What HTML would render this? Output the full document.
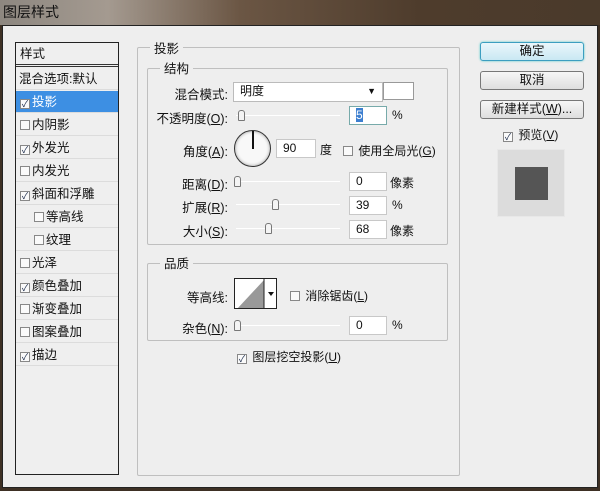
<!DOCTYPE html>
<html><head><meta charset="utf-8"><style>
*{margin:0;padding:0;box-sizing:border-box}
body{width:600px;height:491px;overflow:hidden;background:#3e3024;font-family:"Liberation Sans","Noto Sans CJK SC",sans-serif;font-size:12px;color:#111;position:relative}
.a{position:absolute}
.title{left:0;top:0;width:600px;height:25px;background:linear-gradient(90deg,#8d8780 0%,#a49a90 18%,#6b5644 40%,#4e3c2c 70%,#4a3a2b 100%)}
.title span{position:absolute;left:3px;top:2px;font-size:14px;color:#111}
.body{left:2px;top:25px;width:596px;height:463px;background:#eeeeee;border:1px solid #222}
.list{left:15px;top:42px;width:104px;height:433px;border:1px solid #222;background:#efefef}
.row{position:absolute;left:0;width:102px;height:22px;border-bottom:1px solid #dcdcdc;line-height:22px;font-size:12.5px}
.cb{display:inline-block;width:10px;height:10px;border:1px solid #888;background:#fafafa;vertical-align:-1px;margin-right:2px;font-size:9px;line-height:8px;text-align:center;color:#124}
.grp{border:1px solid #bfbfbf;border-radius:2px}
.lg{position:absolute;background:#eeeeee;padding:0 4px;font-size:12.5px}
.lbl{position:absolute;text-align:right;font-size:12.5px}
.inp{position:absolute;height:19px;background:#fff;border:1px solid #c8c8c8;padding-left:6px;line-height:17px;font-size:12px}
.track{position:absolute;height:1px;background:#aaa;border-bottom:1px solid #fff}
.knob{position:absolute;width:7px;height:11px;border:1px solid #777;border-radius:3px 3px 1px 1px;background:#f4f4f4}
.btn{position:absolute;left:480px;width:104px;height:19px;border:1px solid #777;border-radius:3px;background:linear-gradient(#f6f6f6,#dedede);text-align:center;line-height:17px;font-size:12.5px}
</style></head><body>
<div class="a title"><span>图层样式</span></div>
<div class="a body"></div>
<div class="a list">
 <div class="row" style="top:0;height:24px;border-bottom:3px double #333;padding-left:4px">样式</div>
 <div class="row" style="top:25px;padding-left:3px">混合选项:默认</div>
 <div class="row" style="top:48px;background:#3d8fe3;color:#fff;padding-left:4px"><span class="cb">✓</span>投影</div>
 <div class="row" style="top:71px;padding-left:4px"><span class="cb"></span>内阴影</div>
 <div class="row" style="top:94px;padding-left:4px"><span class="cb">✓</span>外发光</div>
 <div class="row" style="top:117px;padding-left:4px"><span class="cb"></span>内发光</div>
 <div class="row" style="top:140px;padding-left:4px"><span class="cb">✓</span>斜面和浮雕</div>
 <div class="row" style="top:163px;padding-left:18px"><span class="cb"></span>等高线</div>
 <div class="row" style="top:186px;padding-left:18px"><span class="cb"></span>纹理</div>
 <div class="row" style="top:209px;padding-left:4px"><span class="cb"></span>光泽</div>
 <div class="row" style="top:232px;padding-left:4px"><span class="cb">✓</span>颜色叠加</div>
 <div class="row" style="top:255px;padding-left:4px"><span class="cb"></span>渐变叠加</div>
 <div class="row" style="top:278px;padding-left:4px"><span class="cb"></span>图案叠加</div>
 <div class="row" style="top:301px;padding-left:4px"><span class="cb">✓</span>描边</div>
</div>
<div class="a grp" style="left:137px;top:47px;width:323px;height:429px"></div>
<div class="lg" style="left:150px;top:38px">投影</div>
<div class="a grp" style="left:147px;top:68px;width:301px;height:177px"></div>
<div class="lg" style="left:160px;top:58px">结构</div>
<div class="lbl" style="left:140px;width:88px;top:84px">混合模式:</div>
<div class="inp" style="left:233px;top:82px;width:150px;height:20px;border-color:#bbb">明度<span style="position:absolute;right:6px;top:0;font-size:9px">▼</span></div>
<div class="a" style="left:383px;top:82px;width:31px;height:18px;background:#fff;border:1px solid #999"></div>
<div class="lbl" style="left:140px;width:88px;top:108px">不透明度(<u>O</u>):</div>
<div class="track" style="left:236px;top:115px;width:104px"></div><div class="knob" style="left:238px;top:110px"></div>
<div class="inp" style="left:349px;top:106px;width:38px;border-color:#7aa"><span style="background:#3d7fd0;color:#fff">5</span></div>
<div class="a" style="left:392px;top:108px">%</div>
<div class="lbl" style="left:140px;width:88px;top:141px">角度(<u>A</u>):</div>
<div class="a" style="left:234px;top:130px;width:37px;height:37px;border:1px solid #333;border-radius:50%;background:#f8f8f8;box-shadow:inset 0 0 3px #999"></div>
<div class="a" style="left:252px;top:131px;width:2px;height:18px;background:#111"></div>
<div class="inp" style="left:276px;top:139px;width:40px">90</div>
<div class="a" style="left:320px;top:141px">度</div>
<div class="a" style="left:343px;top:142px"><span class="cb"></span> 使用全局光(<u>G</u>)</div>
<div class="lbl" style="left:140px;width:88px;top:174px">距离(<u>D</u>):</div>
<div class="track" style="left:236px;top:181px;width:104px"></div><div class="knob" style="left:234px;top:176px"></div>
<div class="inp" style="left:349px;top:172px;width:38px">0</div><div class="a" style="left:390px;top:174px">像素</div>
<div class="lbl" style="left:140px;width:88px;top:197px">扩展(<u>R</u>):</div>
<div class="track" style="left:236px;top:204px;width:104px"></div><div class="knob" style="left:272px;top:199px"></div>
<div class="inp" style="left:349px;top:196px;width:38px">39</div><div class="a" style="left:392px;top:198px">%</div>
<div class="lbl" style="left:140px;width:88px;top:221px">大小(<u>S</u>):</div>
<div class="track" style="left:236px;top:228px;width:104px"></div><div class="knob" style="left:265px;top:223px"></div>
<div class="inp" style="left:349px;top:220px;width:38px">68</div><div class="a" style="left:390px;top:222px">像素</div>

<div class="a grp" style="left:147px;top:263px;width:301px;height:78px"></div>
<div class="lg" style="left:160px;top:253px">品质</div>
<div class="lbl" style="left:140px;width:88px;top:287px">等高线:</div>
<div class="a" style="left:234px;top:278px;width:43px;height:31px;border:1px solid #222;background:#fff;overflow:hidden">
<svg width="43" height="31" style="position:absolute;left:0;top:0"><polygon points="2,30 29,1 29,30" fill="#999"/><line x1="29" y1="0" x2="29" y2="31" stroke="#222"/><polygon points="33,13 39,13 36,17" fill="#111"/></svg></div>
<div class="a" style="left:290px;top:287px"><span class="cb"></span> 消除锯齿(<u>L</u>)</div>
<div class="lbl" style="left:140px;width:88px;top:318px">杂色(<u>N</u>):</div>
<div class="track" style="left:236px;top:325px;width:104px"></div><div class="knob" style="left:234px;top:320px"></div>
<div class="inp" style="left:349px;top:316px;width:38px">0</div><div class="a" style="left:392px;top:318px">%</div>
<div class="a" style="left:237px;top:348px"><span class="cb">✓</span> 图层挖空投影(<u>U</u>)</div>

<div class="btn" style="top:42px;border-color:#3c9ec0;background:linear-gradient(#eaf6fb,#c9e8f3);box-shadow:0 0 2px #5cc">确定</div>
<div class="btn" style="top:71px">取消</div>
<div class="btn" style="top:100px">新建样式(<u>W</u>)...</div>
<div class="a" style="left:503px;top:126px"><span class="cb">✓</span> 预览(<u>V</u>)</div>
<div class="a" style="left:497px;top:149px;width:68px;height:68px;background:#dcdcdc;border:1px solid #e8e8e8"></div>
<div class="a" style="left:515px;top:167px;width:33px;height:33px;background:#555"></div>
</body></html>
